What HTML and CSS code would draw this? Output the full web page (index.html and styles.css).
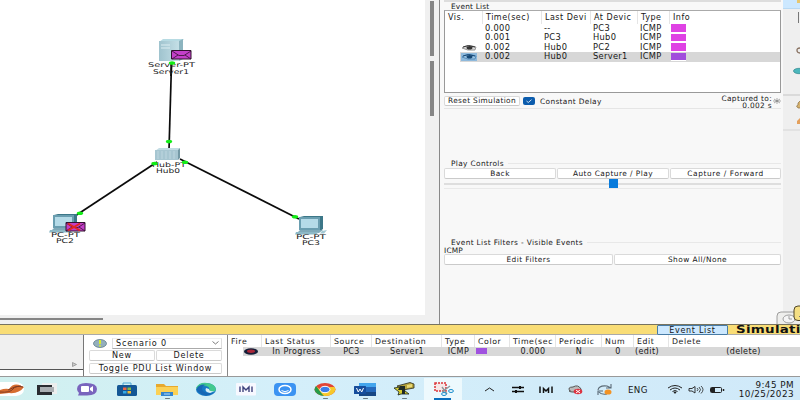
FILE: index.html
```
<!DOCTYPE html>
<html lang="en">
<head>
<meta charset="utf-8">
<title>Network simulation</title>
<link rel="stylesheet" href="styles.css">
</head>
<body>
<div class="app">
  <main class="workspace">
    <section class="canvas">
      <svg class="topology" width="425" height="315" viewBox="0 0 425 315">
        <defs>
          <linearGradient id="steel" x1="0" x2="1"><stop offset="0" stop-color="#9fc3ce"/><stop offset="1" stop-color="#c4dfe6"/></linearGradient>
          <g id="pc">
            <path d="M5 1L9 0H28V13L25 15Z" fill="#3c7788"/>
            <path d="M4 1H25V14H4Z" fill="#6a9eb0"/>
            <path d="M6 3H23V12H6Z" fill="#b5dbe8"/>
            <path d="M5 14H28L24 17H2Z" fill="#7fa9b8"/>
            <path d="M1 16H24L21 18.500H0Z" fill="#8cb8c6"/>
            <path d="M27 15L32 14L29 17.500H25Z" fill="#a2c8d3"/>
          </g>
        </defs>
        <g stroke="#0b0b0b" stroke-width="1.7">
          <path d="M171.500 63L169 150"/><path d="M157 162L75 216"/><path d="M180 159L299 219"/>
        </g>
        <path d="M159 42L163 39H184L181 42Z" fill="#b7dbe3"/>
        <path d="M159 41H179V61H159Z" fill="url(#steel)"/>
        <path d="M179 41L183 39V59L179 61Z" fill="#8cb4bf"/>
        <path d="M161 45H170M161 48H170" stroke="#dceef2"/>
        <path d="M171.500 62L171 76" stroke="#0b0b0b" stroke-width="1.700"/>
        <path d="M155 151L159 148H180L178 151Z" fill="#c3dce4"/>
        <path d="M155 150H178V160H155Z" fill="#a7c6d1"/><path d="M178 150L180 148V158L178 160Z" fill="#7499a5"/>
        <path d="M158 151V159M162 151V159M166 151V159M170 151V159M174 151V159" stroke="#c4dce4" stroke-width=".8"/>
        <use href="#pc" x="49" y="214"/><use href="#pc" x="295" y="216"/>
        <g class="node-label">
          <text x="148" y="67.200" textLength="47" lengthAdjust="spacingAndGlyphs">Server-PT</text><text x="153" y="74" textLength="36" lengthAdjust="spacingAndGlyphs">Server1</text>
          <text x="152" y="166.500" textLength="34" lengthAdjust="spacingAndGlyphs">Hub-PT</text><text x="156" y="173.300" textLength="24" lengthAdjust="spacingAndGlyphs">Hub0</text>
          <text x="51" y="236.500" textLength="29" lengthAdjust="spacingAndGlyphs">PC-PT</text><text x="56" y="243.300" textLength="18" lengthAdjust="spacingAndGlyphs">PC2</text>
          <text x="296" y="238.500" textLength="30" lengthAdjust="spacingAndGlyphs">PC-PT</text><text x="302" y="245.300" textLength="18" lengthAdjust="spacingAndGlyphs">PC3</text>
        </g>
        <g fill="#12ed16">
          <ellipse cx="172" cy="63" rx="3.200" ry="1.800"/><ellipse cx="169" cy="141.500" rx="3.200" ry="1.800"/>
          <ellipse cx="154.500" cy="163.500" rx="3.200" ry="1.800"/><ellipse cx="185" cy="162.300" rx="3.200" ry="1.800"/>
          <ellipse cx="80" cy="213.300" rx="3.200" ry="1.800"/><ellipse cx="295" cy="216.700" rx="3.200" ry="1.800"/>
        </g>
        <g fill="#c33fc9" stroke="#32102f">
          <path d="M171.500 50.500H191V59H171.500Z"/><path d="M172 51L179 55.500H184L191 51M172 59L178 55M191 59L185 55" fill="none" stroke-width=".8"/>
          <path d="M66 222.500H85V231H66Z"/><path d="M66 223L73 227.500H78L85 223M66 231L72 227M85 231L79 227" fill="none" stroke-width=".8"/>
        </g>
        <path d="M68 223.500L80 230.500M80 223.500L68 230.500" stroke="#e22620" stroke-width="2"/>
      </svg>
      <div class="vscroll"><i></i><i></i></div>
      <div class="hscroll"><i></i></div>
    </section>

    <aside class="panel">
      <div class="group-title event-title">Event List</div>
      <div class="events">
        <div class="erow ehead"><span>Vis.</span><span>Time(sec)</span><span>Last Devi</span><span>At Devic</span><span>Type</span><span>Info</span></div>
        <div class="erow"><span></span><span>0.000</span><span>--</span><span>PC3</span><span>ICMP</span><span><i class="swatch pink"></i></span></div>
        <div class="erow"><span></span><span>0.001</span><span>PC3</span><span>Hub0</span><span>ICMP</span><span><i class="swatch pink"></i></span></div>
        <div class="erow"><span class="vis"><svg width="16" height="8" viewBox="0 0 16 8"><path d="M1 4Q6 0 15 3L14 6Q6 7 1 4" fill="#d8d8d8" stroke="#777" stroke-width=".7"/><path d="M2 3Q7 0 14 3" fill="none" stroke="#333"/><ellipse cx="8.500" cy="3.800" rx="3" ry="1.800" fill="#333"/></svg></span><span>0.002</span><span>Hub0</span><span>PC2</span><span>ICMP</span><span><i class="swatch pink"></i></span></div>
        <div class="erow selected"><span class="vis"><svg width="16" height="8" viewBox="0 0 16 8"><path d="M0 0H16V8H0Z" fill="#8eb9dc"/><path d="M1 4Q6 0 15 3L14 6Q6 7 1 4" fill="#9dc5e4" stroke="#3d77a8" stroke-width=".7"/><path d="M2 3Q7 0 14 3" fill="none" stroke="#164774"/><ellipse cx="8.500" cy="3.800" rx="3" ry="1.800" fill="#164774"/></svg></span><span>0.002</span><span>Hub0</span><span>Server1</span><span>ICMP</span><span><i class="swatch violet"></i></span></div>
      </div>
      <div class="sim-row">
        <button class="btn reset">Reset Simulation</button>
        <span class="check"><svg width="12" height="8" viewBox="0 0 12 8"><path d="M3.500 4L5.300 5.500L8.500 2.700" fill="none" stroke="#fff" stroke-width=".8"/></svg></span>
        <span class="delay">Constant Delay</span>
        <span class="captured">Captured to:<br>0.002 s</span>
        <svg class="burst" width="8" height="6" viewBox="0 0 8 6"><path d="M0 3H8M1 1L7 5M7 1L1 5M4 0V6" stroke="#777" stroke-width=".6"/></svg>
      </div>
      <div class="group-title play-title"><span>Play Controls</span></div>
      <div class="play-buttons"><button class="btn">Back</button><button class="btn">Auto Capture / Play</button><button class="btn wide">Capture / Forward</button></div>
      <div class="slider"><i></i></div>
      <div class="group-title filter-title"><span>Event List Filters - Visible Events</span></div>
      <div class="filter-value">ICMP</div>
      <div class="filter-buttons"><button class="btn">Edit Filters</button><button class="btn">Show All/None</button></div>
    </aside>

    <nav class="tools">
      <svg width="17" height="324" viewBox="0 0 17 324">
        <path d="M0 0H17V8.500H0Z" fill="#cce8ff"/><path d="M0 8.500H17" stroke="#9dcdf0" stroke-width=".6"/>
        <path d="M14 0H17V3H14Z" fill="#e7c66d"/><path d="M15.500 12V23" stroke="#777"/>
        <path d="M17 48Q13.500 48 14 51Q14.500 53 17 53" fill="none" stroke="#8b7565" stroke-width="1.300"/>
        <ellipse cx="16" cy="71" rx="5.500" ry="2.700" fill="#4cb7bc" stroke="#287e85" stroke-width=".6"/>
        <path d="M0 95H17" stroke="#c5c5c5"/><path d="M17 101L15 103V105L13.500 106L15 108H17" fill="#d6b26e" stroke="#8b6f43" stroke-width=".7"/>
        <path d="M17 118L14 121L14 124H17" fill="#e4a05c"/><path d="M0 130H17" stroke="#d5d5d5"/>
      </svg>
    </nav>
  </main>

  <div class="modebar"><span class="event-tab">Event List</span><span class="mode">Simulation</span>
    <svg class="clock" width="26" height="20" viewBox="0 0 26 20"><path d="M1 19V11Q1 7 5 7H26V19" fill="#eeeeec" stroke="#888" stroke-width=".8"/><ellipse cx="13" cy="14" rx="6" ry="4" fill="#f5f5f5" stroke="#888" stroke-width=".8"/><path d="M13 11V14H16" fill="none" stroke="#888" stroke-width=".8"/><path d="M26 1H22Q18 1 18 5V12Q18 15.500 22 15.500H26" fill="#f5df83" stroke="#50472b"/><path d="M26 9L23 12" stroke="#777"/></svg>
  </div>

  <section class="bottom">
    <div class="device-box"><div class="device-top"><svg width="5" height="5" viewBox="0 0 5 5"><path d="M.5 .5L4.500 2.500L.5 4.500Z" fill="#ccc" stroke="#888" stroke-width=".7"/></svg></div><div class="device-line"></div></div>
    <div class="scenario">
      <div class="scenario-select">
        <svg width="14" height="9" viewBox="0 0 14 9"><ellipse cx="7" cy="4.500" rx="6.500" ry="4" fill="#94afbc" stroke="#547280" stroke-width=".7"/><path d="M7 1V5M7 6.200V7.500" stroke="#d9ef2c" stroke-width="2"/></svg>
        <span class="select">Scenario 0<svg width="7" height="4" viewBox="0 0 7 4"><path d="M.5 .5L3.500 3L6.500 .5" fill="none" stroke="#444" stroke-width=".7"/></svg></span>
      </div>
      <div class="scenario-buttons"><button class="btn">New</button><button class="btn">Delete</button></div>
      <button class="btn toggle">Toggle PDU List Window</button>
    </div>
    <div class="pdus">
      <div class="prow phead"><span>Fire</span><span>Last Status</span><span>Source</span><span>Destination</span><span>Type</span><span>Color</span><span>Time(sec</span><span>Periodic</span><span>Num</span><span>Edit</span><span>Delete</span></div>
      <div class="prow pdata"><span><svg width="16" height="8" viewBox="0 0 16 8"><ellipse cx="8" cy="4.500" rx="7" ry="3.200" fill="#151e38"/><ellipse cx="8" cy="4.200" rx="4" ry="1.700" fill="#a82639"/></svg></span><span>In Progress</span><span>PC3</span><span>Server1</span><span>ICMP</span><span><i></i></span><span>0.000</span><span>N</span><span>0</span><span>(edit)</span><span>(delete)</span></div>
    </div>
  </section>

  <footer class="taskbar">
    <div class="apps">
      <svg class="shell" width="24" height="18" viewBox="0 0 24 18"><path d="M0 1H16Q24 2 24 8Q24 14 16 15H0Z" fill="#fff"/><path d="M0 9Q5 7 9 8Q14 1 21 5L24 6Q19 13 9 12L0 13Z" fill="#d66d31"/><path d="M0 11Q10 12 13 8T23 6M8 9Q15 5 21 5" fill="none" stroke="#833b21"/></svg>
      <span class="task"><svg width="22" height="18" viewBox="0 0 22 18"><path d="M5 2H20V13H5Z" fill="#eceeee"/><path d="M0 4H15V14H0Z" fill="#292b30"/><path d="M3 6H17V11H3Z" fill="#aaaeb2"/></svg></span>
      <span class="task"><svg width="22" height="18" viewBox="0 0 22 18"><path d="M10 2Q21 2 21 8Q21 14.500 11 14.500H2L3 12Q1 10 1 8Q1 2 10 2" fill="#7964bd"/><rect x="5" y="5" width="8" height="6" rx="1" fill="#fff"/><path d="M14 7L17 5V11L14 9Z" fill="#fff"/></svg></span>
      <span class="task"><svg width="22" height="18" viewBox="0 0 22 18"><path d="M7 5V2H15V5" fill="none" stroke="#4da7d5"/><rect x="1" y="4" width="20" height="11" rx="1.500" fill="#145795"/><path d="M7 6.500H10.500V9H7Z" fill="#ef6641"/><path d="M11.500 6.500H15V9H11.500Z" fill="#87ba45"/><path d="M7 10H10.500V12.500H7Z" fill="#36aae4"/><path d="M11.500 10H15V12.500H11.500Z" fill="#f0ba35"/></svg></span>
      <span class="task running"><svg width="22" height="18" viewBox="0 0 22 18"><path d="M0 3H8L10 5H22V14H0Z" fill="#e7a92e"/><path d="M0 6H22V14H0Z" fill="#fbd155"/><path d="M5 11H17V15H5Z" fill="#3485ce"/><path d="M8 13H14" stroke="#b7dbf4"/></svg></span>
      <span class="task"><svg width="22" height="18" viewBox="0 0 22 18"><ellipse cx="11" cy="8.500" rx="10" ry="6.500" fill="#1679c5"/><path d="M1 7Q4 1 12 2Q21 3 21 9Q19 12 14 10Q16 5 9 5Q4 5 1 8" fill="#43c98e"/><path d="M2 7Q5 2 12 4Q7 4 7 8Q8 13 18 12Q11 17 5 12Q1 10 2 7" fill="#1768b5"/><path d="M11 7Q9 11 15 12L20 10Q14 11 14 8Z" fill="#d9f0f8"/></svg></span>
      <span class="task"><svg width="22" height="18" viewBox="0 0 22 18"><rect x="1" y="2" width="20" height="12.500" rx="1" fill="#f7f8ff"/><path d="M5 5.500V11M17 5.500V11M8 11V6L11 9L14 6V11" fill="none" stroke="#3e427d" stroke-width="1.400"/></svg></span>
      <span class="task"><svg width="22" height="18" viewBox="0 0 22 18"><rect x="0" y="2" width="22" height="13" rx="4" fill="#3b93f2"/><ellipse cx="11" cy="8.500" rx="6" ry="4" fill="none" stroke="#fff" stroke-width="1.500"/><path d="M7.500 9.500Q11 12 14.500 9.500" fill="none" stroke="#fff"/></svg></span>
      <span class="task running"><svg width="22" height="18" viewBox="0 0 22 18"><ellipse cx="11" cy="8.500" rx="10.500" ry="6.500" fill="#e24436"/><path d="M2 5L9 15Q19 15.500 21.500 9Q21.500 7 20.500 6H11L9 11Z" fill="#f6c82c"/><path d="M2 5L8 13L10 15Q2 14 .5 9Q.5 7 2 5" fill="#249d4b"/><ellipse cx="11" cy="8.500" rx="5" ry="3.200" fill="#3b7dea" stroke="#fff"/></svg></span>
      <span class="task running"><svg width="22" height="18" viewBox="0 0 22 18"><rect x="5" y="2" width="17" height="13" rx="1" fill="#2568bb"/><path d="M5 2H22V6H5Z" fill="#43a5ed"/><path d="M5 11H22V15H5Z" fill="#174785"/><rect x="0" y="5" width="12" height="8" rx=".5" fill="#164d9c"/><path d="M2.500 7L4.300 11L6 8L7.700 11L9.500 7" fill="none" stroke="#fff" stroke-width="1"/></svg></span>
      <span class="task running"><svg width="22" height="18" viewBox="0 0 22 18"><path d="M4 5L17 1.500L21 3V7L10 9Z" fill="#b5a33b" stroke="#292b22" stroke-width=".8"/><path d="M1 7L7 6L16 13H8L5 14L6 11Z" fill="#d6ce32" stroke="#17231c" stroke-width=".8"/><path d="M7 5H12V13H9V9H5Z" fill="#202a26"/><path d="M14 4L19 3V6L14 7Z" fill="#e8d775"/></svg></span>
      <span class="task current"><svg width="22" height="18" viewBox="0 0 22 18"><rect x="3" y="2" width="11" height="8" fill="#f7e7e7" stroke="#dc3439" stroke-width="1.500" stroke-dasharray="2 1"/><path d="M10 6L15 13M18 5L10 11" stroke="#8b969b" stroke-width="1.300"/><ellipse cx="19" cy="10" rx="2.400" ry="1.500" fill="none" stroke="#178ccd"/><ellipse cx="12" cy="13" rx="2.400" ry="1.500" fill="none" stroke="#178ccd"/></svg></span>
    </div>
    <div class="tray">
      <svg width="135" height="18" viewBox="0 0 135 18">
        <path d="M5 10L9.500 7L14 10" fill="none" stroke="#222"/>
        <path d="M32 6.500H44M32 10.500H44" stroke="#111" stroke-width="1.300"/><path d="M40 5V8M36 9V12" stroke="#111" stroke-width="2"/>
        <path d="M60 5.500V12M72 5.500V12M63.500 12V7.500L66 10L68.500 7.500V12" fill="none" stroke="#111" stroke-width="1.500"/>
        <path d="M90 10Q87 6 93 6Q98 3 101 8V11H92Q88 11 90 9" fill="#bbb" stroke="#555"/><ellipse cx="98" cy="10.500" rx="4.300" ry="2.700" fill="#dc3442"/><path d="M96 9L100 12M100 9L96 12" stroke="#fff"/>
        <path d="M118 9Q119 4 127 5L131 7M131 3V7H126M118 14V10H123M119 11Q121 14 127 13" fill="none" stroke="#5b6b77" stroke-width="1.100"/><ellipse cx="128" cy="11" rx="3.500" ry="2.600" fill="#f29325"/>
      </svg>
      <span class="lang">ENG</span>
      <svg class="status" width="60" height="18" viewBox="0 0 60 18">
        <path d="M1 7Q8 2 15 7M3 9Q8 5 13 9M5.500 10.500Q8 8.500 10.500 10.500" fill="none" stroke="#222"/><ellipse cx="8" cy="11.500" rx="1.300" ry="1" fill="#222"/>
        <path d="M22 7.500H25L28 5.500V12L25 10H22Z" fill="none" stroke="#222" stroke-width=".9"/><path d="M30 7Q32 8.500 30 10M32 6Q35 8.500 32 11.500M34 5Q38 8.500 34 12.500" fill="none" stroke="#222" stroke-width=".8"/>
        <rect x="43.500" y="6.500" width="11" height="5" rx="1" fill="none" stroke="#222"/><path d="M44 7H48V11H44Z" fill="#222"/><path d="M56.500 8V10" stroke="#222" stroke-width="1.500"/>
      </svg>
      <span class="clock-text">9:45 PM<br>10/25/2023</span>
    </div>
  </footer>
</div>
</body>
</html>
```
FILE: styles.css
```
* { box-sizing: border-box; }
body { margin: 0; font: 7.4px/9px "DejaVu Sans", "Noto Sans", sans-serif; letter-spacing: .35px; color: #171717; }
svg { display: block; flex: none; }
i { display: block; }
.app { width: 800px; height: 400px; overflow: hidden; display: flex; flex-direction: column; background: #f0f0f0; }
.workspace { height: 324px; flex: none; display: grid; grid-template-columns: 440px 343px 17px; overflow: hidden; }
.canvas { display: grid; grid-template-columns: 425px 14px; grid-template-rows: 315px 9px; border-right: 1px solid #888; background: #f0f0f0; }
.topology { background: #fff; }
.node-label { font: 6.5px/6px "DejaVu Sans", sans-serif; letter-spacing: 0; fill: #222; }
.vscroll { display: flex; flex-direction: column; align-items: center; gap: 5px; padding-top: 1px; }
.vscroll i { width: 4px; height: 55px; background: #858585; }
.hscroll { padding-top: 3px; }
.hscroll i { width: 103px; height: 2px; background: #858585; }

.panel { background: #f8f8f8; padding: 0 2px 0 4px; display: flex; flex-direction: column; overflow: hidden; }
.group-title { padding-left: 7px; white-space: nowrap; }
.event-title { height: 10px; padding-top: 1px; border-top: 2px solid #ddd; line-height: 8px; letter-spacing: .2px; }
.events { height: 83px; flex: none; background: #fff; border: 1px solid #999; border-top-color: #aaa; font-size: 8.3px; letter-spacing: .3px; }
.erow { display: grid; grid-template-columns: 38px 59px 49px 47px 32px 1fr; height: 9.5px; line-height: 9.6px; }
.erow > span { padding-left: 2px; overflow: hidden; white-space: nowrap; }
.ehead { height: 12.5px; line-height: 13px; font-size: 8px; letter-spacing: .5px; }
.ehead > span { padding-left: 3px; border-right: 1px solid #e5e5e5; }
.ehead > span:last-child { border: 0; }
.selected { background: linear-gradient(90deg, #fff 15px, #d7d7d7 15px); }
.erow .vis { padding: 1px 0 0 16px; }
.erow > span:last-child { padding-left: 1px; }
.ehead > span:last-child { padding-left: 3px; }
.swatch { width: 15px; height: 8.5px; margin-top: .5px; border-bottom: .5px solid #fff; }
.pink { background: #df42e4; }
.violet { background: #a14edc; }
.btn { font: inherit; letter-spacing: .45px; color: #171717; background: #fff; border: 1px solid #dadada; border-bottom-color: #cacaca; border-radius: 2px; padding: 0; white-space: nowrap; text-align: center; }
.btn.wide { letter-spacing: .6px; }
.sim-row { height: 15px; flex: none; margin-top: 1px; display: flex; align-items: center; border-bottom: 1px solid #e5e5e5; }
.btn.reset { width: 76px; height: 10px; line-height: 8px; letter-spacing: .35px; }
.check { width: 12px; height: 8px; margin-left: 3px; background: #0b5cad; border-radius: 2px; }
.delay { margin-left: 5px; }
.captured { margin-left: auto; line-height: 7px; text-align: right; padding-top: 1px; }
.burst { margin: 0 0 0 1px; }
.play-title { height: 9px; margin-top: 50px; display: flex; align-items: center; }
.group-title > span { padding-right: 4px; }
.play-title::after, .filter-title::after { content: ""; height: 1px; flex: 1; background: #e8e8e8; }
.play-buttons { display: grid; grid-template-columns: 112px 112px 1fr; gap: 1px; }
.play-buttons .btn, .filter-buttons .btn { height: 11px; line-height: 9px; }
.slider { height: 10px; padding-left: 164.5px; background: linear-gradient(#f8f8f8 4px, #dedede 4px, #dedede 6px, #f8f8f8 6px); border-bottom: 1px solid #e9e9e9; }
.slider i { width: 9px; height: 9px; background: #087bdc; }
.filter-title { height: 9px; margin-top: 49px; display: flex; align-items: center; }
.filter-value { height: 7px; line-height: 7px; letter-spacing: .2px; }
.filter-buttons { display: grid; grid-template-columns: 169px 1fr; gap: 1px; }
.tools { background: #efefef; overflow: hidden; }

.modebar { position: relative; height: 11px; flex: none; display: flex; align-items: center; padding-left: 657px; background: #f9dd76; border-top: 1px solid #77735f; border-bottom: 1px solid #aaa; }
.event-tab { width: 71px; height: 10px; border: 1px solid #477ba5; border-radius: 1px; background: #cce8ff; text-align: center; line-height: 9px; font-size: 8px; letter-spacing: .7px; flex: none; }
.mode { margin-left: 8px; font-size: 10.5px; font-weight: bold; line-height: 9px; letter-spacing: .2px; color: #111; transform: scaleX(1.28); transform-origin: left; }
.clock { position: absolute; right: -2px; bottom: 9px; }

.bottom { height: 42px; flex: none; display: grid; grid-template-columns: 84px 143px 573px; background: #fff; border-bottom: 1px solid #999; }
.device-box { border-right: 1px solid #777; }
.device-top { height: 34px; background: #f0f0f0; display: flex; align-items: flex-end; justify-content: flex-end; padding: 0 6px 2px 0; }
.device-line { height: 7px; background: #fff; border-top: 1px solid #555; }
.scenario { padding: 2px 5px 1px 5px; display: grid; grid-template-rows: 12px 12px 12px; gap: 1px; font-size: 8.1px; }
.scenario-select { display: flex; align-items: center; padding-left: 4px; gap: 5px; }
.select { height: 11px; flex: 1; display: flex; align-items: center; justify-content: space-between; padding: 0 2px 0 3px; letter-spacing: .8px; border: 1px solid #ddd; border-top-color: #eee; border-bottom-color: #aaa; }
.scenario-buttons { display: grid; grid-template-columns: 1fr 1fr; gap: 1px; }
.scenario .btn { height: 11px; line-height: 9px; letter-spacing: .75px; }
.pdus { border-left: 1px solid #888; font-size: 8px; letter-spacing: .4px; }
.prow { display: grid; grid-template-columns: 34px 69px 41px 70px 33px 35px 46px 46px 32px 35px 1fr; height: 11.5px; line-height: 13px; }
.prow > span { white-space: nowrap; overflow: hidden; }
.phead > span { padding-left: 3px; border-right: 1px solid #e5e5e5; font-size: 7.8px; letter-spacing: .6px; }
.phead > span:last-child { border: 0; }
.pdata { height: 9px; line-height: 9px; background: linear-gradient(90deg, #fff 15px, #d8d8d8 15px); text-align: center; }
.pdata > span:first-child { padding-left: 15px; }
.pdata > span:nth-child(6) { padding: 1.5px 0 0 1px; }
.pdata > span:nth-child(10) { text-align: left; padding-left: 1px; }
.pdata > span:last-child { padding-left: 18px; }
.pdata i { width: 11px; height: 6px; background: #a052df; }

.taskbar { flex: 1; display: flex; justify-content: space-between; background: linear-gradient(90deg, #d0f0ef, #d4effa 35%, #d0e9f9); }
.apps { display: flex; padding-top: 4px; }
.apps > .shell { margin-right: 4px; }
.task { display: flex; justify-content: center; position: relative; width: 39.6px; height: 19px; flex: none; }
.running::after { content: ""; position: absolute; left: 18px; bottom: 1px; width: 5px; height: 1.5px; background: #6d7c82; border-radius: 1px; }
.apps .current { width: 38px; background: #edf9fd; box-shadow: 0 -3px #edf9fd; }
.current::after { content: ""; position: absolute; bottom: 0; left: 10px; width: 17px; height: 2px; background: #096fbe; }
.tray { width: 320px; flex: none; display: flex; align-items: flex-start; padding-top: 4px; }
.lang { margin-left: 13px; width: 22px; line-height: 18px; font-size: 8.7px; }
.status { margin-left: 17px; }
.clock-text { flex: 1; padding: 0 6px 0 0; text-align: right; font-size: 8.8px; letter-spacing: .45px; line-height: 8.5px; white-space: nowrap; }
```
